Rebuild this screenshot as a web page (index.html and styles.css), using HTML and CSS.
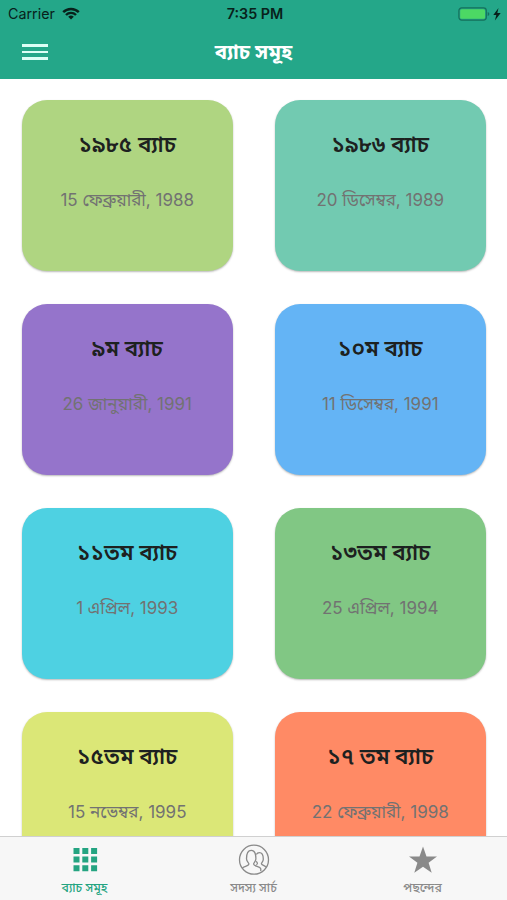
FILE: index.html
```html
<!DOCTYPE html>
<html lang="bn">
<head>
    <meta charset="UTF-8">
    <meta name="viewport" content="width=device-width, initial-scale=1.0">
    <title>ব্যাচ সমূহ</title>
    <link rel="stylesheet" href="styles.css">
</head>
<body>
    <header class="header">
        <div class="status-bar">
            <div class="carrier">
                <span>Carrier</span>
                <svg class="wifi" viewBox="0 0 18 13" width="18" height="13">
                    <path d="M1.2 5.2a11 11 0 0 1 15.6 0M4 8a7 7 0 0 1 10 0" fill="none" stroke="#08211b" stroke-width="2.4"/>
                    <path d="M9 12.6L6.2 9.8a4 4 0 0 1 5.6 0z" fill="#08211b"/>
                </svg>
            </div>
            <span class="time">7:35 PM</span>
            <div class="battery">
                <svg viewBox="0 0 44 14" width="44" height="14">
                    <rect x=".9" y=".9" width="27.4" height="12.2" rx="2.8" fill="none" stroke="#15705b" stroke-width="1.2"/>
                    <rect x="2.2" y="2.2" width="24.8" height="9.6" rx="1.600" fill="#4cd964"/>
                    <path d="M29.700 5v4q1.700-.6 1.700-2t-1.700-2z" fill="#15705b"/>
                    <path d="M40.500 1L35.300 8h3l-1.400 5.500 5.800-7.400h-3.400z" fill="#08211b"/>
                </svg>
            </div>
        </div>
        <div class="nav-bar">
            <button class="menu"><i></i><i></i><i></i></button>
            <h1>ব্যাচ সমূহ</h1>
        </div>
    </header>

    <main class="batches">
        <div class="card lime-green"><h2>১৯৮৫ ব্যাচ</h2><p>15 ফেব্রুয়ারী, 1988</p></div>
        <div class="card teal"><h2>১৯৮৬ ব্যাচ</h2><p>20 ডিসেম্বর, 1989</p></div>
        <div class="card purple"><h2>৯ম ব্যাচ</h2><p>26 জানুয়ারী, 1991</p></div>
        <div class="card blue"><h2>১০ম ব্যাচ</h2><p>11 ডিসেম্বর, 1991</p></div>
        <div class="card cyan"><h2>১১তম ব্যাচ</h2><p>1 এপ্রিল, 1993</p></div>
        <div class="card green"><h2>১৩তম ব্যাচ</h2><p>25 এপ্রিল, 1994</p></div>
        <div class="card lime"><h2>১৫তম ব্যাচ</h2><p>15 নভেম্বর, 1995</p></div>
        <div class="card orange"><h2>১৭ তম ব্যাচ</h2><p>22 ফেব্রুয়ারী, 1998</p></div>
    </main>

    <nav class="tabs">
        <a class="tab active">
            <svg viewBox="0 0 32 32" width="32" height="32">
                <path d="M4.500 4h6v6h-6zM13.300 4h6v6h-6zM22.100 4h6v6h-6zM4.500 12.600h6v6h-6zM13.300 12.600h6v6h-6zM22.100 12.600h6v6h-6zM4.500 21.200h6v6h-6zM13.300 21.200h6v6h-6zM22.100 21.200h6v6h-6z" fill="currentColor"/>
            </svg>
            <span>ব্যাচ সমূহ</span>
        </a>
        <a class="tab">
            <svg viewBox="0 0 32 32" width="32" height="32" fill="none" stroke="currentColor" stroke-width="1.3">
                <circle cx="16" cy="15.700" r="14.500"/>
                <path d="M4.300 24.200c1-2 6.200-1.900 6.600-4 .3-1.500-2.400-2.500-2.400-5.500 0-5 1.100-8.400 4.700-8.400s4.700 3.400 4.700 8.400c0 3-2.500 4-2.300 5.500.4 2.100 6.700 2.300 7.100 4.500.2 1 .1 1.800 0 2.500"/>
                <path d="M18.300 10.500c.7-1.300 1.700-1.900 3.100-1.900 2.900 0 3.900 2.800 3.900 6.600 0 2.600-2 3.300-1.900 4.500.2 1.700 3.800 1.600 4.500 3.600M18.200 17.200c.5 1 1.300 1.400 1.200 2.300-.1.600-.5 1-1.100 1.200"/>
            </svg>
            <span>সদস্য সার্চ</span>
        </a>
        <a class="tab">
            <svg viewBox="0 0 32 32" width="32" height="32">
                <path d="M16 2.500l3.500 9.900H30l-8.400 6.400 3.100 10L16 22.800l-8.700 6 3.100-10L2 12.400h10.500z" fill="currentColor"/>
            </svg>
            <span>পছন্দের</span>
        </a>
    </nav>
</body>
</html>
```
FILE: styles.css
```css
*{
    margin: 0;
    padding: 0;
    box-sizing: border-box;
}

body{
    display: flex;
    flex-direction: column;
    height: 100vh;
    overflow: hidden;
    background: #fff;
    font-family: Inter, "Noto Sans Bengali", "Noto Sans", sans-serif;
}

.header{
    height: 79px;
    flex-shrink: 0;
    background: #24a789;
}

.status-bar{
    display: grid;
    grid-template-columns: 1fr auto 1fr;
    align-items: center;
    height: 27px;
    padding: 0 5px 0 8px;
    color: #08211b;
    font-size: 14.3px;
}

.carrier{
    display: flex;
    align-items: center;
    gap: 7px;
}

.time{
    font-weight: 600;
}

.battery{
    display: flex;
    justify-content: flex-end;
}

.nav-bar{
    display: grid;
    grid-template-columns: 1fr auto 1fr;
    align-items: center;
    height: 50px;
    padding: 0 22px;
}

.menu{
    display: flex;
    flex-direction: column;
    gap: 4px;
    width: 26px;
    border: none;
    background: none;
}

.menu i{
    width: 100%;
    height: 2.5px;
    background: #dcfff6;
}

.nav-bar h1{
    color: #fff;
    font-size: 20.5px;
    line-height: 30px;
    font-weight: 700;
}

.batches{
    display: grid;
    grid-template-columns: 211.5px 211.5px;
    grid-auto-rows: 171px;
    gap: 33px 41.5px;
    flex: 1;
    min-height: 0;
    overflow: hidden;
    padding: 21px 21.5px 0;
}

.card{
    border-radius: 25px;
    padding-top: 27px;
    text-align: center;
    white-space: nowrap;
    box-shadow: 0 1px 2px rgba(0,0,0,0.28);
}

.card h2{
    color: #1d2120;
    font-size: 22.4px;
    line-height: 34px;
    font-weight: 600;
}

.card p{
    margin-top: 25px;
    color: #727272;
    font-size: 17px;
    line-height: 28px;
}

.lime-green{ background: #afd581; }
.teal{ background: #72cab1; }
.purple{ background: #9574cb; }
.blue{ background: #64b4f5; }
.cyan{ background: #4ed1e2; }
.green{ background: #81c784; }
.lime{ background: #dbe777; }
.orange{ background: #ff8a65; }

.tabs{
    display: grid;
    grid-template-columns: repeat(3, 1fr);
    flex-shrink: 0;
    height: 64px;
    border-top: 1px solid #d0d0d0;
    background: #f7f7f7;
}

.tab{
    display: flex;
    flex-direction: column;
    align-items: center;
    padding-top: 7px;
    color: #8a8a8a;
    font-size: 12.3px;
    line-height: 18px;
    font-weight: 500;
}

.tab span{
    margin-top: 3px;
}

.tab.active{
    color: #24a481;
}
```
